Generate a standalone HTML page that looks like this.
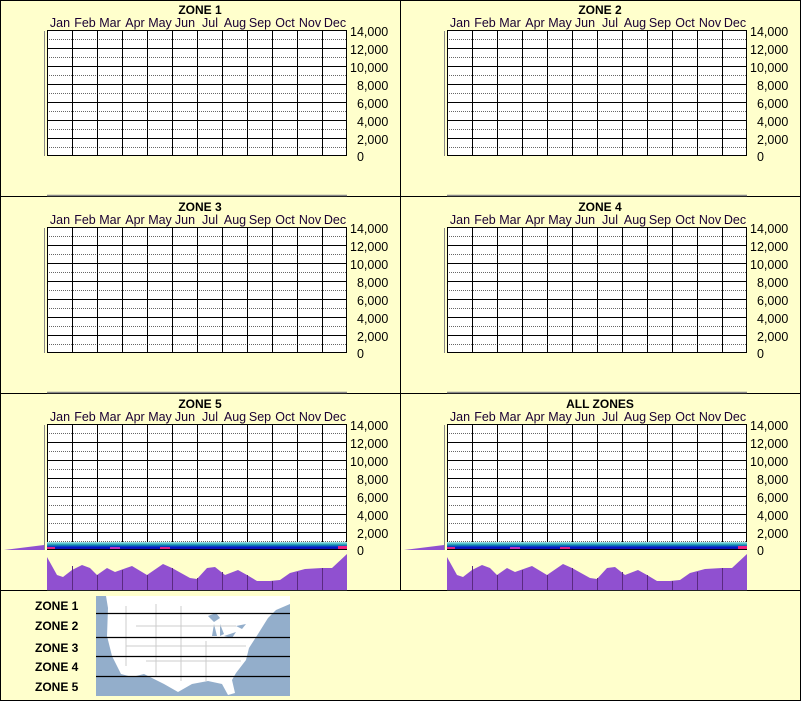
<!DOCTYPE html>
<html><head><meta charset="utf-8"><style>
html,body{margin:0;padding:0;background:#FFFFCC;}
body{width:801px;height:701px;position:relative;overflow:hidden;font-family:"Liberation Sans",Arial,sans-serif;}
svg{position:absolute;left:0;top:0}
text{font-family:"Liberation Sans",Arial,sans-serif;}
.t{font-weight:bold;font-size:12px;text-anchor:middle;fill:#000}
.m{font-size:12.5px;text-anchor:middle;fill:#1a0033}
.y{font-size:12.5px;fill:#000}
.z{font-weight:bold;font-size:12px;fill:#000}
</style></head><body>
<svg width="801" height="701" viewBox="0 0 801 701">
<defs>
<g id="grid">
<rect x="47" y="30" width="300" height="126" fill="#fff"/>
<g stroke="#666" stroke-width="1" stroke-dasharray="1,1">
<line x1="47" x2="347" y1="39.5" y2="39.5"/><line x1="47" x2="347" y1="57.5" y2="57.5"/><line x1="47" x2="347" y1="75.5" y2="75.5"/><line x1="47" x2="347" y1="93.5" y2="93.5"/><line x1="47" x2="347" y1="111.5" y2="111.5"/><line x1="47" x2="347" y1="129.5" y2="129.5"/><line x1="47" x2="347" y1="147.5" y2="147.5"/>
</g>
<g stroke="#000" stroke-width="1">
<line x1="47" x2="347" y1="30.5" y2="30.5"/><line x1="47" x2="347" y1="48.5" y2="48.5"/><line x1="47" x2="347" y1="66.5" y2="66.5"/><line x1="47" x2="347" y1="84.5" y2="84.5"/><line x1="47" x2="347" y1="102.5" y2="102.5"/><line x1="47" x2="347" y1="120.5" y2="120.5"/><line x1="47" x2="347" y1="138.5" y2="138.5"/><line x1="47" x2="347" y1="155.5" y2="155.5"/>
<line x1="47.5" x2="47.5" y1="30" y2="156"/><line x1="72.5" x2="72.5" y1="30" y2="156"/><line x1="97.5" x2="97.5" y1="30" y2="156"/><line x1="122.5" x2="122.5" y1="30" y2="156"/><line x1="147.5" x2="147.5" y1="30" y2="156"/><line x1="172.5" x2="172.5" y1="30" y2="156"/><line x1="197.5" x2="197.5" y1="30" y2="156"/><line x1="222.5" x2="222.5" y1="30" y2="156"/><line x1="247.5" x2="247.5" y1="30" y2="156"/><line x1="272.5" x2="272.5" y1="30" y2="156"/><line x1="297.5" x2="297.5" y1="30" y2="156"/><line x1="322.5" x2="322.5" y1="30" y2="156"/><line x1="346.5" x2="346.5" y1="30" y2="156"/>
</g>
<line x1="44.5" x2="44.5" y1="31" y2="156" stroke="#888" stroke-width="1"/>
<line x1="47" x2="347" y1="195.5" y2="195.5" stroke="#888" stroke-width="1.5"/>
</g>
<linearGradient id="bl" x1="0" y1="0" x2="0" y2="1"><stop offset="0" stop-color="#aee"/><stop offset="0.35" stop-color="#1a9ab0"/><stop offset="0.65" stop-color="#0018c8"/><stop offset="1" stop-color="#2a10a0"/></linearGradient>
<g id="purp">
<rect x="47" y="542" width="300" height="8" fill="url(#bl)"/>
<rect x="47" y="547" width="8" height="3" fill="#e0208a"/><rect x="110" y="547" width="10" height="3" fill="#c030c0"/><rect x="160" y="547" width="10" height="3" fill="#e0208a"/><rect x="338" y="546" width="9" height="4" fill="#f02080"/>
<g stroke="#000"><line x1="47" x2="347" y1="549.5" y2="549.5"/></g>
<path d="M4,550 L44,545 L44,550 Z" fill="#9050d0"/>
<path d="M47,557 L57,575 L63,577 L72,570 L82,565 L90,568 L97,575 L107,568 L115,572 L132,566 L147,575 L163,564 L172,568 L190,578 L197,579 L207,568 L215,567 L225,575 L238,570 L247,575 L257,581 L270,581 L280,580 L290,573 L305,569 L322,568 L332,568 L347,554 L347,590 L47,590 Z" fill="#9050d0"/>
<g stroke="#5a2a80"><line x1="72.5" x2="72.5" y1="566" y2="590"/><line x1="97.5" x2="97.5" y1="575" y2="590"/><line x1="122.5" x2="122.5" y1="570" y2="590"/><line x1="147.5" x2="147.5" y1="575" y2="590"/><line x1="172.5" x2="172.5" y1="568" y2="590"/><line x1="197.5" x2="197.5" y1="578" y2="590"/><line x1="222.5" x2="222.5" y1="572" y2="590"/><line x1="247.5" x2="247.5" y1="575" y2="590"/><line x1="272.5" x2="272.5" y1="581" y2="590"/><line x1="297.5" x2="297.5" y1="572" y2="590"/><line x1="322.5" x2="322.5" y1="568" y2="590"/></g>
</g>
</defs>

<rect x="0.5" y="0.5" width="800" height="700" fill="#FFFFCC" stroke="#000"/>
<g stroke="#000"><line x1="400.5" x2="400.5" y1="0" y2="590"/><line x1="0" x2="801" y1="196.5" y2="196.5"/><line x1="0" x2="801" y1="393.5" y2="393.5"/><line x1="0" x2="801" y1="590.5" y2="590.5"/></g>

<g transform="translate(0,0)"><use href="#grid"/><text class="t" x="200" y="14">ZONE 1</text></g>
<g transform="translate(400,0)"><use href="#grid"/><text class="t" x="200" y="14">ZONE 2</text></g>
<g transform="translate(0,197)"><use href="#grid"/><text class="t" x="200" y="14">ZONE 3</text></g>
<g transform="translate(400,197)"><use href="#grid"/><text class="t" x="200" y="14">ZONE 4</text></g>
<g transform="translate(0,394)"><use href="#grid"/><text class="t" x="200" y="14">ZONE 5</text></g>
<g transform="translate(400,394)"><use href="#grid"/><text class="t" x="200" y="14">ALL ZONES</text></g>
<g><use href="#purp"/></g>
<g transform="translate(400,0)"><use href="#purp"/></g>

<g>
<g transform="translate(0,27)"><text class="m" x="60">Jan</text><text class="m" x="85">Feb</text><text class="m" x="110">Mar</text><text class="m" x="135">Apr</text><text class="m" x="160">May</text><text class="m" x="185">Jun</text><text class="m" x="210">Jul</text><text class="m" x="235">Aug</text><text class="m" x="260">Sep</text><text class="m" x="285">Oct</text><text class="m" x="310">Nov</text><text class="m" x="335">Dec</text></g>
<g transform="translate(400,27)"><text class="m" x="60">Jan</text><text class="m" x="85">Feb</text><text class="m" x="110">Mar</text><text class="m" x="135">Apr</text><text class="m" x="160">May</text><text class="m" x="185">Jun</text><text class="m" x="210">Jul</text><text class="m" x="235">Aug</text><text class="m" x="260">Sep</text><text class="m" x="285">Oct</text><text class="m" x="310">Nov</text><text class="m" x="335">Dec</text></g>
<g transform="translate(0,224)"><text class="m" x="60">Jan</text><text class="m" x="85">Feb</text><text class="m" x="110">Mar</text><text class="m" x="135">Apr</text><text class="m" x="160">May</text><text class="m" x="185">Jun</text><text class="m" x="210">Jul</text><text class="m" x="235">Aug</text><text class="m" x="260">Sep</text><text class="m" x="285">Oct</text><text class="m" x="310">Nov</text><text class="m" x="335">Dec</text></g>
<g transform="translate(400,224)"><text class="m" x="60">Jan</text><text class="m" x="85">Feb</text><text class="m" x="110">Mar</text><text class="m" x="135">Apr</text><text class="m" x="160">May</text><text class="m" x="185">Jun</text><text class="m" x="210">Jul</text><text class="m" x="235">Aug</text><text class="m" x="260">Sep</text><text class="m" x="285">Oct</text><text class="m" x="310">Nov</text><text class="m" x="335">Dec</text></g>
<g transform="translate(0,421)"><text class="m" x="60">Jan</text><text class="m" x="85">Feb</text><text class="m" x="110">Mar</text><text class="m" x="135">Apr</text><text class="m" x="160">May</text><text class="m" x="185">Jun</text><text class="m" x="210">Jul</text><text class="m" x="235">Aug</text><text class="m" x="260">Sep</text><text class="m" x="285">Oct</text><text class="m" x="310">Nov</text><text class="m" x="335">Dec</text></g>
<g transform="translate(400,421)"><text class="m" x="60">Jan</text><text class="m" x="85">Feb</text><text class="m" x="110">Mar</text><text class="m" x="135">Apr</text><text class="m" x="160">May</text><text class="m" x="185">Jun</text><text class="m" x="210">Jul</text><text class="m" x="235">Aug</text><text class="m" x="260">Sep</text><text class="m" x="285">Oct</text><text class="m" x="310">Nov</text><text class="m" x="335">Dec</text></g>
</g>

<g transform="translate(0,0)"><text class="y" x="350" y="36">14,000</text><text class="y" x="350" y="54">12,000</text><text class="y" x="350" y="72">10,000</text><text class="y" x="357" y="90">8,000</text><text class="y" x="357" y="108">6,000</text><text class="y" x="357" y="126">4,000</text><text class="y" x="357" y="144">2,000</text><text class="y" x="357" y="161">0</text></g>
<g transform="translate(400,0)"><text class="y" x="350" y="36">14,000</text><text class="y" x="350" y="54">12,000</text><text class="y" x="350" y="72">10,000</text><text class="y" x="357" y="90">8,000</text><text class="y" x="357" y="108">6,000</text><text class="y" x="357" y="126">4,000</text><text class="y" x="357" y="144">2,000</text><text class="y" x="357" y="161">0</text></g>
<g transform="translate(0,197)"><text class="y" x="350" y="36">14,000</text><text class="y" x="350" y="54">12,000</text><text class="y" x="350" y="72">10,000</text><text class="y" x="357" y="90">8,000</text><text class="y" x="357" y="108">6,000</text><text class="y" x="357" y="126">4,000</text><text class="y" x="357" y="144">2,000</text><text class="y" x="357" y="161">0</text></g>
<g transform="translate(400,197)"><text class="y" x="350" y="36">14,000</text><text class="y" x="350" y="54">12,000</text><text class="y" x="350" y="72">10,000</text><text class="y" x="357" y="90">8,000</text><text class="y" x="357" y="108">6,000</text><text class="y" x="357" y="126">4,000</text><text class="y" x="357" y="144">2,000</text><text class="y" x="357" y="161">0</text></g>
<g transform="translate(0,394)"><text class="y" x="350" y="36">14,000</text><text class="y" x="350" y="54">12,000</text><text class="y" x="350" y="72">10,000</text><text class="y" x="357" y="90">8,000</text><text class="y" x="357" y="108">6,000</text><text class="y" x="357" y="126">4,000</text><text class="y" x="357" y="144">2,000</text><text class="y" x="357" y="161">0</text></g>
<g transform="translate(400,394)"><text class="y" x="350" y="36">14,000</text><text class="y" x="350" y="54">12,000</text><text class="y" x="350" y="72">10,000</text><text class="y" x="357" y="90">8,000</text><text class="y" x="357" y="108">6,000</text><text class="y" x="357" y="126">4,000</text><text class="y" x="357" y="144">2,000</text><text class="y" x="357" y="161">0</text></g>

<g transform="translate(96,596)">
<rect x="0" y="0" width="194" height="100" fill="#93aecb"/>
<path d="M10,0 L194,0 L194,8 L180,14 L172,22 L162,38 L153,52 L150,64 L140,77 L136,84 L139,97 L132,99 L126,88 L112,85 L96,88 L82,96 L68,88 L48,78 L36,81 L25,78 L16,60 L11,40 L12,12 Z" fill="#fff"/>
<path d="M112,20 L120,17 L124,22 L118,26 Z M118,28 L121,40 L116,40 Z M124,28 L128,38 L124,40 Z M128,40 L140,36 L136,42 Z M140,30 L150,28 L146,33 Z" fill="#93aecb"/>
<g stroke="#ccc" fill="none" stroke-width="1"><path d="M30,10 L30,70 M60,8 L60,80 M85,10 L85,85 M110,45 L110,85 M40,30 L140,30 M30,50 L150,50 M50,65 L145,65"/></g>
<g stroke="#000" stroke-width="1.3"><line x1="0" x2="194" y1="17.5" y2="17.5"/><line x1="0" x2="194" y1="41.5" y2="41.5"/><line x1="0" x2="194" y1="60.5" y2="60.5"/><line x1="0" x2="194" y1="80.5" y2="80.5"/></g>
</g>
<text class="z" x="35" y="610">ZONE 1</text>
<text class="z" x="35" y="630">ZONE 2</text>
<text class="z" x="35" y="652">ZONE 3</text>
<text class="z" x="35" y="671">ZONE 4</text>
<text class="z" x="35" y="691">ZONE 5</text>
</svg>
</body></html>
